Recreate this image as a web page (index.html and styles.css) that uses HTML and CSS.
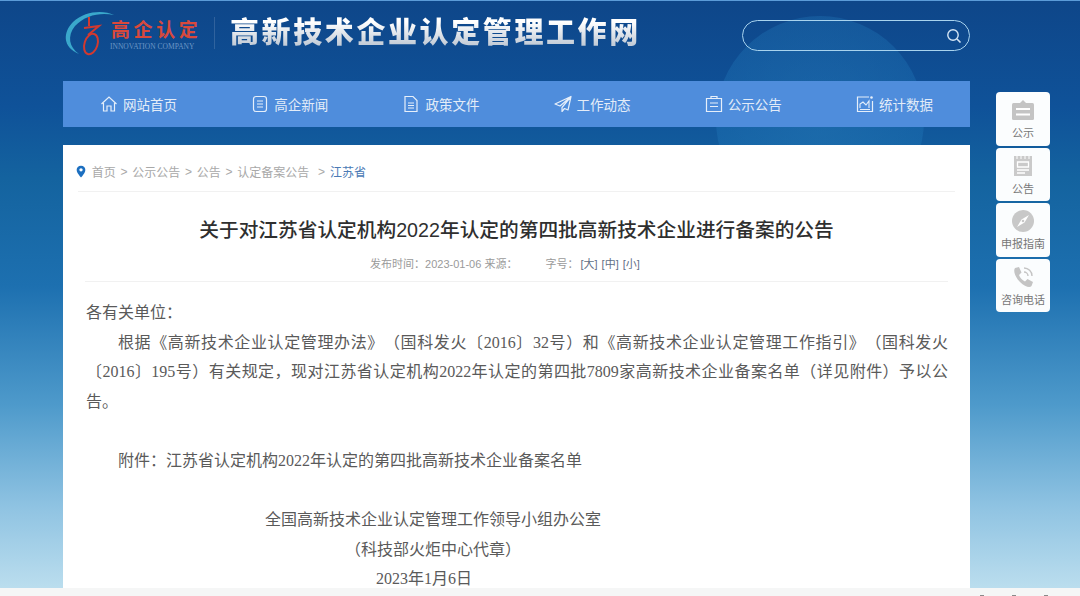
FILE: index.html
```html
<!DOCTYPE html>
<html lang="zh-CN">
<head>
  <meta charset="UTF-8" />
  <meta name="viewport" content="width=device-width, initial-scale=1" />
  <title>高新技术企业认定管理工作网</title>
  <link rel="stylesheet" href="styles.css">
</head>
<body>
  <div class="globe"></div>

  <div class="wrap">
    <header class="top">
      <div class="logo">
        <svg class="logo-mark" viewBox="0 0 56 48" width="56" height="48">
          <path d="M51 6 C40 1 22 2 10 13 C0 23 -1 38 16 45 C6 38 4 27 12 17 C22 6 38 3 51 6 Z" fill="#3aa8cc"/>
          <path d="M26 8 L26 17 M21 19 L36 17 L25 26" fill="none" stroke="#d3392f" stroke-width="2"/>
          <ellipse cx="28" cy="35" rx="6.5" ry="10.5" transform="rotate(18 28 35)" fill="none" stroke="#d3392f" stroke-width="2"/>
        </svg>
        <div class="logo-text">
          <div class="logo-cn">高企认定</div>
          <div class="logo-en">INNOVATION COMPANY</div>
        </div>
      </div>
      <div class="divider"></div>
      <h1 class="site-name">高新技术企业认定管理工作网</h1>
      <div class="search">
        <svg viewBox="0 0 16 16" width="16" height="16">
          <circle cx="7" cy="7" r="5.2" fill="none" stroke="#d5e6f5" stroke-width="1.4"/>
          <path d="M11 11 L14.5 14.5" stroke="#d5e6f5" stroke-width="1.6"/>
        </svg>
      </div>
    </header>

    <nav class="nav">
      <a class="nav-item">
        <svg viewBox="0 0 18 18" width="18" height="18"><path d="M1.5 9 L9 2 L16.5 9 M3.5 8 V16 H7 V11 H11 V16 H14.5 V8" fill="none" stroke="#e6effa" stroke-width="1.2"/></svg>
        网站首页
      </a>
      <a class="nav-item">
        <svg viewBox="0 0 18 18" width="18" height="18"><rect x="2.5" y="1.5" width="13" height="15" rx="2.5" fill="none" stroke="#e6effa" stroke-width="1.2"/><path d="M6 6 H12 M6 9 H12 M6 12 H12" stroke="#e6effa" stroke-width="1.2"/></svg>
        高企新闻
      </a>
      <a class="nav-item">
        <svg viewBox="0 0 18 18" width="18" height="18"><path d="M3 1.5 H11 L15 5.5 V16.5 H3 Z" fill="none" stroke="#e6effa" stroke-width="1.2"/><path d="M6 8 H12 M6 10.5 H12 M6 13 H12" stroke="#e6effa" stroke-width="1.2"/></svg>
        政策文件
      </a>
      <a class="nav-item">
        <svg viewBox="0 0 18 18" width="18" height="18"><path d="M17 1.5 L1 9 L6 11 L17 1.5 L8 12.5 V16.5 L10.5 13.5 L14 15 Z" fill="none" stroke="#e6effa" stroke-width="1.2" stroke-linejoin="round"/></svg>
        工作动态
      </a>
      <a class="nav-item">
        <svg viewBox="0 0 18 18" width="18" height="18"><path d="M6 3.5 H12 M6 3.5 V1.5 H12 V3.5 M6 3.5 H1.5 V16.5 H16.5 V3.5 H12 M5 8 H13 M5 11.5 H13" fill="none" stroke="#e6effa" stroke-width="1.2"/></svg>
        公示公告
      </a>
      <a class="nav-item">
        <svg viewBox="0 0 18 18" width="18" height="18"><path d="M13 2 H1.5 V16.5 H16.5 V6" fill="none" stroke="#e6effa" stroke-width="1.2"/><path d="M4 13 V9 L7 7 L10 10 L13 6 V13 M4 14.5 H14" fill="none" stroke="#e6effa" stroke-width="1.1"/><circle cx="15.5" cy="2.5" r="1.3" fill="#e6effa"/></svg>
        统计数据
      </a>
    </nav>

    <main class="card">
      <div class="crumbs">
        <svg viewBox="0 0 12 16" width="10" height="14"><path d="M6 0.5 C2.8 0.5 0.8 2.8 0.8 5.5 C0.8 9 6 14.5 6 14.5 C6 14.5 11.2 9 11.2 5.5 C11.2 2.8 9.2 0.5 6 0.5 Z" fill="#1c6fc0"/><circle cx="6" cy="5.4" r="2" fill="#fff"/></svg>
        <span>首页</span><i>&gt;</i><span>公示公告</span><i>&gt;</i><span>公告</span><i>&gt;</i><span>认定备案公告</span><i class="gap">&gt;</i><span class="now">江苏省</span>
      </div>

      <h2 class="title">关于对江苏省认定机构2022年认定的第四批高新技术企业进行备案的公告</h2>
      <div class="meta">
        <span>发布时间：2023-01-06 来源：</span>
        <span class="size">字号：<b>[大]</b> <b>[中]</b> <b>[小]</b></span>
      </div>

      <div class="article">
        <p>各有关单位：</p>
        <p class="indent">根据《高新技术企业认定管理办法》（国科发火〔2016〕32号）和《高新技术企业认定管理工作指引》（国科发火〔2016〕195号）有关规定，现对江苏省认定机构2022年认定的第四批7809家高新技术企业备案名单（详见附件）予以公告。</p>
        <p>&nbsp;</p>
        <p class="indent">附件：江苏省认定机构2022年认定的第四批高新技术企业备案名单</p>
        <p>&nbsp;</p>
        <p class="sign-1">全国高新技术企业认定管理工作领导小组办公室</p>
        <p class="sign-2">（科技部火炬中心代章）</p>
        <p class="sign-3">2023年1月6日</p>
      </div>
    </main>
  </div>

  <aside class="side">
    <a class="side-btn">
      <svg viewBox="0 0 24 24" width="24" height="24"><path d="M9 5 L12 2 L15 5 Z" fill="#c4c4c4"/><rect x="1" y="5" width="22" height="17" rx="1.5" fill="#c4c4c4"/><path d="M5 11 H19 M5 16.5 H19" stroke="#fff" stroke-width="2"/></svg>
      公示
    </a>
    <a class="side-btn">
      <svg viewBox="0 0 24 24" width="24" height="24"><rect x="3" y="2" width="18" height="20" fill="#cacaca"/><path d="M6 2 V5 M10 2 V5 M14 2 V5 M18 2 V5" stroke="#fff" stroke-width="1"/><path d="M6.5 8 H17.5 V13 H6.5 Z M6 16 H18 M6 19 H14" fill="none" stroke="#fff" stroke-width="1.3"/></svg>
      公告
    </a>
    <a class="side-btn">
      <svg viewBox="0 0 24 24" width="24" height="24"><circle cx="12" cy="12" r="11" fill="#c8c8c8"/><path d="M18 6 L13.5 13.5 L6 18 L10.5 10.5 Z" fill="#fff"/><circle cx="12" cy="12" r="1.3" fill="#c8c8c8"/></svg>
      申报指南
    </a>
    <a class="side-btn">
      <svg viewBox="0 0 24 24" width="24" height="24"><path d="M4 3 L8 2 L10.5 7.5 L8 10 C9 13 11 15 14 16.5 L16.5 14 L22 17 L20.5 21 C19 23 14 22 9 17 C4 12 2 6 4 3 Z" fill="#c4c4c4"/><path d="M13 3 A8 8 0 0 1 21 11 M13 7 A4 4 0 0 1 17 11" fill="none" stroke="#c4c4c4" stroke-width="1.4"/></svg>
      咨询电话
    </a>
  </aside>

  <div class="bottom-strip"><i></i><i></i><i></i></div>
</body>
</html>
```

FILE: styles.css
```css
html, body {
  margin: 0;
  padding: 0;
  height: 100%;
  overflow: hidden;
}

body {
  position: relative;
  border-top: 1px solid #5b9bd8;
  box-sizing: border-box;
  background: linear-gradient(180deg, #0e4689 0%, #0f5299 18%, #14639f 30%, #1d70b0 48%, #4e9acb 68%, #8fc3e2 85%, #bfe0ef 100%);
  font-family: "Liberation Sans", "Noto Sans CJK SC", sans-serif;
}

.globe {
  position: absolute;
  left: 716px;
  top: 15px;
  width: 208px;
  height: 208px;
  border-radius: 50%;
  background: radial-gradient(circle, rgba(45, 135, 195, 0.38) 0%, rgba(35, 125, 190, 0.3) 72%, rgba(30, 120, 185, 0) 100%);
}

.wrap {
  position: relative;
  width: 907px;
  margin-left: 63px;
}

/* cabecera */
.top {
  display: flex;
  align-items: center;
  height: 80px;
  padding-bottom: 16px;
  box-sizing: border-box;
}

.logo {
  display: flex;
  align-items: center;
  width: 151px;
  height: 48px;
}

.logo-mark {
  flex: none;
  margin-right: -8px;
  overflow: visible;
}

.logo-text {
  padding-top: 4px;
}

.logo-cn {
  font-size: 19px;
  font-weight: 700;
  line-height: 22px;
  letter-spacing: 3.6px;
  color: #d8493c;
  white-space: nowrap;
}

.logo-en {
  margin-left: -1px;
  font-family: "Liberation Serif", serif;
  font-size: 7.5px;
  line-height: 9px;
  color: #6c97c6;
  white-space: nowrap;
}

.divider {
  width: 1px;
  height: 32px;
  background: rgba(255, 255, 255, 0.14);
}

.site-name {
  margin: 0 0 6px 15px;
  font-family: "Noto Sans CJK SC", sans-serif;
  font-size: 29px;
  font-weight: 900;
  letter-spacing: 2.6px;
  line-height: 40px;
  white-space: nowrap;
  background: linear-gradient(180deg, #ffffff 30%, #c4cdd8 85%);
  -webkit-background-clip: text;
  background-clip: text;
  color: transparent;
}

.search {
  display: flex;
  align-items: center;
  justify-content: flex-end;
  width: 228px;
  height: 31px;
  margin-top: 5px;
  margin-left: auto;
  padding-right: 7px;
  border: 1px solid #a8d3ee;
  border-radius: 16px;
  box-sizing: border-box;
}

/* menu */
.nav {
  display: grid;
  grid-template-columns: repeat(6, 1fr);
  height: 46px;
  background: #4f8ddc;
}

.nav-item {
  display: flex;
  align-items: center;
  justify-content: center;
  gap: 5px;
  font-size: 13.5px;
  color: #e3ecf8;
}

/* contenido */
.card {
  height: 460px;
  margin-top: 18px;
  padding: 0 22px;
  background: #fff;
  box-sizing: border-box;
}

.crumbs {
  display: flex;
  align-items: center;
  gap: 4.75px;
  height: 47px;
  margin: 0 -7px;
  padding-top: 7px;
  border-bottom: 1px solid #f1f1f1;
  box-sizing: border-box;
  font-size: 12px;
  color: #a8a8a8;
}

.crumbs svg {
  margin-right: 1px;
  margin-left: -2px;
}

.crumbs i {
  font-style: normal;
}

.crumbs .gap {
  margin-left: 4px;
}

.crumbs .now {
  color: #4a7ab5;
}

.title {
  margin: 24px 0 0;
  font-size: 19.7px;
  font-weight: 500;
  line-height: 28px;
  color: #2f2f2f;
  text-align: center;
  white-space: nowrap;
}

.meta {
  display: flex;
  justify-content: center;
  gap: 28px;
  height: 38px;
  padding-top: 12px;
  padding-right: 23px;
  border-bottom: 1px solid #f1f1f1;
  box-sizing: border-box;
  font-size: 11px;
  line-height: 16px;
  color: #9a9a9a;
}

.meta .size {
  word-spacing: 1px;
}

.meta b {
  font-weight: 400;
  color: #5f6f86;
}

.meta b:first-child {
  margin-left: 2px;
}

.article {
  padding-top: 16px;
  padding-left: 1px;
  font-family: "Liberation Serif", "Noto Sans CJK SC", serif;
  font-size: 16px;
  line-height: 29.6px;
  color: #5a5a5a;
  text-spacing-trim: space-all;
  font-kerning: none;
}

.article p {
  margin: 0;
  text-align: justify;
}

.article .indent {
  text-indent: 2em;
}

.article .sign-1 {
  padding-left: 179px;
}

.article .sign-2 {
  padding-left: 259px;
}

.article .sign-3 {
  padding-left: 290px;
}

/* botones laterales */
.side {
  position: absolute;
  left: 996px;
  top: 91px;
  display: flex;
  flex-direction: column;
  gap: 2px;
}

.side-btn {
  display: flex;
  flex-direction: column;
  align-items: center;
  justify-content: center;
  gap: 4px;
  width: 54px;
  height: 53.5px;
  padding-top: 1px;
  border-radius: 4px;
  background: #fbfdfe;
  box-sizing: border-box;
  font-size: 11px;
  line-height: 14px;
  color: #777;
  white-space: nowrap;
}

.bottom-strip {
  position: absolute;
  left: 0;
  right: 0;
  bottom: 0;
  display: flex;
  justify-content: flex-end;
  align-items: flex-end;
  gap: 28px;
  height: 8px;
  padding-right: 32px;
  background: #f5f6f6;
}

.bottom-strip i {
  width: 4px;
  height: 1px;
  background: #8a8a8a;
}
```
